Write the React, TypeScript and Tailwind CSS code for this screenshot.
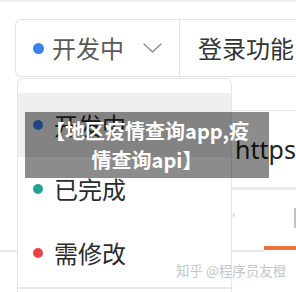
const statusItems = [
  { label: "开发中", dot: "bg-[#3b82f0]", active: true },
  { label: "已完成", dot: "bg-[#26a195]", active: false },
  { label: "需修改", dot: "bg-[#e84545]", active: false },
];

const Chevron = () => (
  <svg width="19" height="10" viewBox="0 0 19 10" fill="none">
    <path d="M1 1l8.5 8L18 1" stroke="#8c8c8c" strokeWidth="1.4" strokeLinecap="round" strokeLinejoin="round" />
  </svg>
);

export default function App() {
  return (
    <div className="relative w-[296px] h-[292px] overflow-hidden bg-white font-['Noto_Sans_CJK_SC',sans-serif]">
      {/* top strip */}
      <div className="h-[2px] bg-[#efefef]" />

      {/* task row */}
      <div className="mt-[17px] ml-[15px] h-[58px] flex border border-r-0 border-[#e4e4e4] rounded-l-[6px]">
        <div className="w-[164px] flex items-center pl-[17px] border-r border-[#e4e4e4]">
          <span className="w-[11px] h-[11px] rounded-full bg-[#3b82f0]" />
          <span className="ml-[8px] text-[24px] leading-none text-[#595959]">开发中</span>
          <span className="ml-[19px] flex">
            <Chevron />
          </span>
        </div>
        <div className="flex items-center pl-[18px] text-[24px] leading-none text-[#333] whitespace-nowrap">
          登录功能
        </div>
      </div>

      {/* content behind the menu */}
      <div className="mt-[33px]">
        <div className="ml-[232px] h-[77px] border-t border-[#e8e8e8] flex items-center pl-[3px]">
          <span className="font-['Noto_Sans',sans-serif] text-[25px] leading-none text-[#222]">https</span>
        </div>
        <div className="ml-[232px] h-[3px] bg-[#ececec]" />
        <div className="ml-[232px] h-[56px] flex items-center justify-between">
          <span className="text-[12px] leading-none text-[#c4c4c4]">'</span>
          <span className="w-[2px] h-[20px] bg-[#c2c2c2]" />
        </div>
        <div className="flex items-start">
          <div className="flex-1 mt-[4px] h-[2px] bg-[#e8e8e8]" />
          <div className="w-[32px] h-[4px] bg-[#e8743c]" />
        </div>
      </div>

      {/* dropdown menu */}
      <div className="absolute left-[17px] top-[78px] w-[215px] h-[230px] bg-white border border-[#e6e6e6] rounded-t-[6px] pt-[14px]">
        {statusItems.map((item) => (
          <div
            key={item.label}
            className={`h-[64px] flex items-center pl-[15px] ${item.active ? "bg-[#efefef]" : ""}`}
          >
            <span className={`w-[10px] h-[10px] rounded-full ${item.dot}`} />
            <span className="ml-[11px] text-[24px] leading-none text-[#2b2b2b]">{item.label}</span>
          </div>
        ))}
        <div className="mt-[2px] h-[2px] bg-[#e8e8e8]" />
      </div>

      {/* caption overlay */}
      <div className="absolute left-[25px] top-[112px] w-[244px] h-[66px] bg-black/45 flex flex-col items-center justify-center text-white font-bold text-[20px] leading-[29px]">
        <span>【地区疫情查询app,疫</span>
        <span>情查询api】</span>
      </div>

      {/* watermark */}
      <div className="absolute left-[176px] top-[264px] text-[13.5px] leading-none text-[#c6c6c6] whitespace-nowrap">
        知乎 @程序员友橙
      </div>
    </div>
  );
}
